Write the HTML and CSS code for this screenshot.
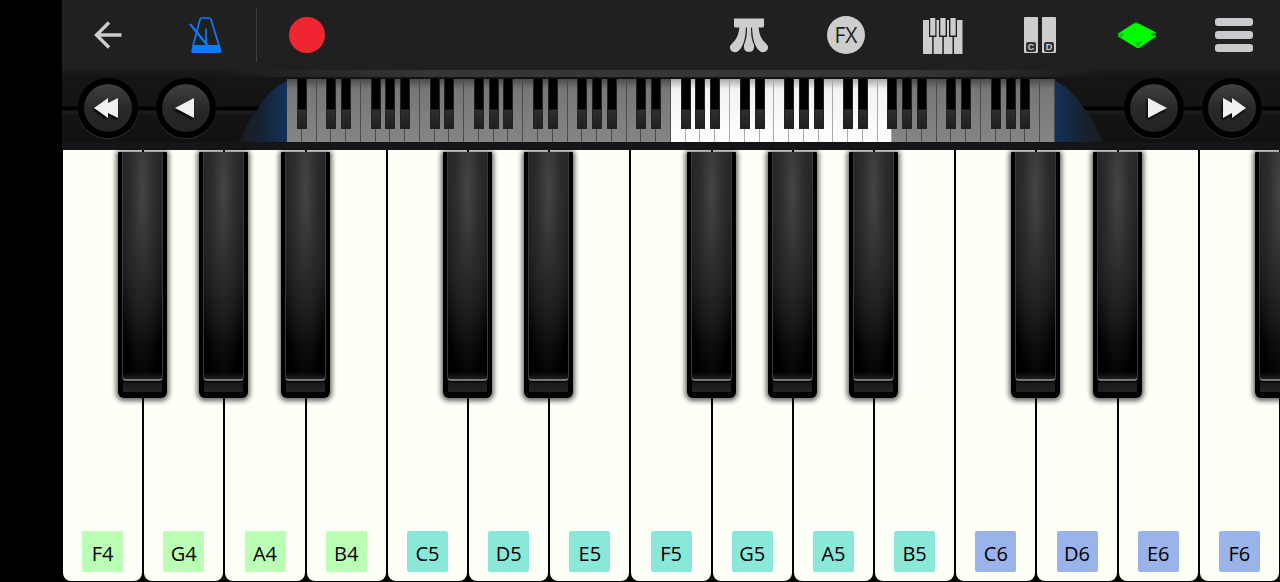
FILE: index.html
```html
<!DOCTYPE html>
<html lang="en">
<head>
  <meta charset="UTF-8" />
  <meta name="viewport" content="width=device-width, initial-scale=1.0"/>
  <title>Piano</title>
  <link rel="stylesheet" href="styles.css">
</head>
<body>

  <div class="piano">
    <header class="toolbar">
      <div class="tools">
        <button class="tool" aria-label="Back">
          <svg width="28" height="28" viewBox="0 0 28 28" fill="none" stroke="#cdcdcd" stroke-width="3.400"><path d="M15 1.500 2.500 14 15 26.500M3 14H27.500"/></svg>
        </button>
        <button class="tool" aria-label="Metronome">
          <svg width="34" height="38" viewBox="0 0 34 38" fill="none" stroke="#0a7cff" stroke-width="1.700">
            <path d="M5 30 12 3.500Q12.500 2 14 2H21Q22.500 2 23 3.500L31.500 31M18 12.500V27"/>
            <path d="M2 8 20 30" stroke-width="2.200"/>
            <path d="M4.500 29H32L33.500 35Q33.500 37 32 37H5Q3 37 3.300 35Z" fill="#0a7cff" stroke="none"/>
          </svg>
        </button>
      </div>
      <div class="tools record-group">
        <button class="tool" aria-label="Record"><span class="record-dot"></span></button>
      </div>
      <div class="tools tools-right">
        <button class="tool" aria-label="Pedal">
          <svg width="40" height="36" viewBox="0 0 40 36" fill="#cdcdcd">
            <path d="M5 1.500H35V9Q35 10.500 33.500 10.500H6.500Q5 10.500 5 9Z"/>
            <path d="M10.500 9H17C16.500 18 16 26 11 32.500Q7 37 2.500 34Q-1 30.500 3 26.500C8 22 10 17 10.500 9Z"/>
            <path d="M29.500 9H23C23.500 18 24 26 29 32.500Q33 37 37.500 34Q41 30.500 37 26.500C32 22 30 17 29.500 9Z"/>
            <path d="M18 9H22C22 18 22.500 22 25 28Q26 35 20 35Q14 35 15 28C17.500 22 18 18 18 9Z"/>
          </svg>
        </button>
        <button class="tool" aria-label="Effects"><span class="fx">FX</span></button>
        <button class="tool" aria-label="Keyboard">
          <svg width="40" height="37" viewBox="0 0 40 37">
            <path fill="#cdcdcd" d="M0 3H39.500V37H0Z"/>
            <path fill="#202020" d="M6 0H13.500V20H6ZM16 0H24V20H16ZM26 0H34V20H26ZM9.200 18H10.700V37H9.200ZM19.300 18H20.800V37H19.300ZM29.500 18H31V37H29.500Z"/>
            <path fill="#cdcdcd" d="M7.200 1H12.300V18.500H7.200ZM17.300 1H22.600V18.500H17.300ZM27.400 1H32.700V18.500H27.400Z"/>
          </svg>
        </button>
        <button class="tool note-names" aria-label="Note names"><span class="note-bar"><b>C</b></span><span class="note-bar"><b>D</b></span></button>
        <button class="tool" aria-label="Theme">
          <svg width="40" height="28" viewBox="0 0 40 28">
            <path fill="#00fa00" d="M19 1 39 11.500V15.500L22 27H20L1 15.500V12.500Z"/>
            <path fill="#0a9a20" d="M17 3 19 1 22 3ZM34 12 39 11.500V15L35 15Z"/>
            <path fill="#06c810" d="M1 12.500 7 12 5 17 1 15.500ZM17 21 25 21 21 26Z"/>
          </svg>
        </button>
        <button class="tool menu" aria-label="Menu"><span></span><span></span><span></span></button>
      </div>
    </header>

    <nav class="navigator">
      <button class="nav-btn" aria-label="Octave down">
        <svg width="28" height="24" viewBox="0 0 28 24"><path d="M0 12 14 2V7L24 2V22L14 17V22Z"/></svg>
      </button>
      <button class="nav-btn" aria-label="Key down">
        <svg width="28" height="24" viewBox="0 0 28 24"><path d="M3 12 22 2V22Z"/></svg>
      </button>
      <div class="overview">
        <svg class="wing" viewBox="0 0 48 65" preserveAspectRatio="none">
          <defs>
            <linearGradient id="wing">
              <stop offset="0" stop-color="#191b1e"/>
              <stop offset="0.450" stop-color="#162333"/>
              <stop offset="1" stop-color="#123259"/>
            </linearGradient>
          </defs>
          <path fill="url(#wing)" d="M48 3C34 9 26 20 17 34Q6 48 0 65H48Z"/>
        </svg>
        <div class="mini-keys" id="miniKeys"></div>
        <svg class="wing wing-right" viewBox="0 0 48 65" preserveAspectRatio="none">
          <path fill="url(#wing)" d="M48 3C34 9 26 20 17 34Q6 48 0 65H48Z"/>
        </svg>
      </div>
      <button class="nav-btn" aria-label="Key up">
        <svg width="28" height="24" viewBox="0 0 28 24"><path d="M8 2 27 12 8 22Z"/></svg>
      </button>
      <button class="nav-btn" aria-label="Octave up">
        <svg width="28" height="24" viewBox="0 0 28 24"><path d="M28 12 14 2V7L5 2V22L14 17V22Z"/></svg>
      </button>
    </nav>

    <main class="keys">
      <div class="key"><button class="white"><span class="note oct4">F4</span></button><button class="black" aria-label="F#4"></button></div>
      <div class="key"><button class="white"><span class="note oct4">G4</span></button><button class="black" aria-label="G#4"></button></div>
      <div class="key"><button class="white"><span class="note oct4">A4</span></button><button class="black" aria-label="A#4"></button></div>
      <div class="key"><button class="white"><span class="note oct4">B4</span></button></div>
      <div class="key"><button class="white"><span class="note oct5">C5</span></button><button class="black" aria-label="C#5"></button></div>
      <div class="key"><button class="white"><span class="note oct5">D5</span></button><button class="black" aria-label="D#5"></button></div>
      <div class="key"><button class="white"><span class="note oct5">E5</span></button></div>
      <div class="key"><button class="white"><span class="note oct5">F5</span></button><button class="black" aria-label="F#5"></button></div>
      <div class="key"><button class="white"><span class="note oct5">G5</span></button><button class="black" aria-label="G#5"></button></div>
      <div class="key"><button class="white"><span class="note oct5">A5</span></button><button class="black" aria-label="A#5"></button></div>
      <div class="key"><button class="white"><span class="note oct5">B5</span></button></div>
      <div class="key"><button class="white"><span class="note oct6">C6</span></button><button class="black" aria-label="C#6"></button></div>
      <div class="key"><button class="white"><span class="note oct6">D6</span></button><button class="black" aria-label="D#6"></button></div>
      <div class="key"><button class="white"><span class="note oct6">E6</span></button></div>
      <div class="key"><button class="white"><span class="note oct6">F6</span></button><button class="black" aria-label="F#6"></button></div>
    </main>
  </div>

  <script src="script.js"></script>
</body>
</html>
```

FILE: styles.css
```css
* {
  box-sizing: border-box;
}
body {
  margin: 0;
  background-color: #000;
  font-family: "Open Sans", "Liberation Sans", sans-serif;
}
button {
  margin: 0;
  padding: 0;
  border: none;
  background: none;
  font-family: inherit;
  cursor: pointer;
}
.piano {
  display: flex;
  flex-direction: column;
  min-height: 100vh;
  margin-left: 62px;
  overflow: hidden;
}

/* toolbar */
.toolbar {
  display: flex;
  align-items: center;
  height: 70px;
  padding: 0 22px;
  background-color: #202020;
}
.tools {
  display: flex;
  align-items: center;
  gap: 49px;
}
.tool {
  display: flex;
  align-items: center;
  justify-content: center;
  width: 48px;
  height: 54px;
}
.record-group {
  margin-left: 27px;
  padding-left: 26px;
  border-left: 1px solid #3d3d3d;
}
.record-dot {
  width: 36px;
  height: 36px;
  border-radius: 50%;
  background-color: #ef2631;
}
.tools-right {
  margin-left: auto;
}
.fx {
  width: 38px;
  height: 38px;
  border-radius: 50%;
  background-color: #cdcdcd;
  color: #202020;
  font-size: 21px;
  line-height: 38px;
}
.note-names {
  gap: 4px;
}
.note-bar {
  display: flex;
  align-items: flex-end;
  justify-content: center;
  width: 14px;
  height: 36px;
  padding-bottom: 1px;
  border-radius: 1px;
  background-color: #cdcdcd;
}
.note-bar b {
  width: 10px;
  height: 10px;
  border-radius: 2px;
  background-color: #333;
  color: #cdcdcd;
  font-family: "Liberation Sans", sans-serif;
  font-size: 9px;
  line-height: 10px;
}
.menu {
  flex-direction: column;
  gap: 5px;
}
.menu span {
  width: 38px;
  height: 8px;
  border-radius: 3px;
  background-color: #cac9cd;
}

/* navigator strip */
.navigator {
  display: flex;
  align-items: flex-start;
  gap: 18px;
  height: 80px;
  padding: 8px 18px 0 16px;
  background:
    linear-gradient(90deg, transparent 12%, #363636 30%, #363636 70%, transparent 86%) top / 100% 7px no-repeat,
    linear-gradient(#1b1b1b 0, #151515 6px, #141414 36px, #000 37px, #000 40px, #1f1f1f 41px, #131313 46px, #111 72px, #161616 73px);
}
.nav-btn {
  display: flex;
  flex-shrink: 0;
  align-items: center;
  justify-content: center;
  width: 60px;
  height: 60px;
  border: 6px solid #000;
  border-radius: 50%;
  background: linear-gradient(#414141, #292929 50%, #222) padding-box;
  box-shadow: 0 1px 1px #343434;
}
.nav-btn svg {
  fill: #f0f0f0;
  filter: drop-shadow(-1px 2px 1px #000);
}
.overview {
  display: flex;
  flex: 1;
  height: 64px;
  margin: 0 3px 0 5px;
}
.wing {
  flex-shrink: 0;
  width: 48px;
  height: 64px;
}
.wing-right {
  transform: scaleX(-1);
}
.mini-keys {
  display: flex;
  flex: 1;
  border-top: 1px solid #111;
  background-color: #4c4c4c;
}
.mini-key {
  position: relative;
  flex: 1;
  border-right: 1px solid #4c4c4c;
  background: linear-gradient(#4c4c4c, #777 10px, #858585);
}
.mini-key.active {
  border-right-color: #aaa;
  background: linear-gradient(#aaa, #f2f2f2 10px, #fff);
}
.mini-key.sharp::after {
  content: "";
  position: absolute;
  top: 0;
  right: -6px;
  z-index: 1;
  width: 8px;
  height: 49px;
  border: 1px solid #222;
  border-top: none;
  background: linear-gradient(#000 30px, #2e2e2e 31px, #202020);
}

/* keyboard */
.keys {
  display: flex;
  flex: 1;
}
.key {
  position: relative;
  display: flex;
  flex: 1;
  padding: 0 1px 1px;
}
.white {
  display: flex;
  flex: 1;
  align-items: flex-end;
  justify-content: center;
  padding-bottom: 9px;
  border-radius: 0 0 8px 8px;
  background-color: #fefff6;
}
.note {
  width: 41px;
  height: 41px;
  padding-top: 3px;
  border-radius: 2px;
  color: #000;
  font-size: 20px;
  line-height: 40px;
}
.oct4 {
  background-color: #bbffb6;
}
.oct5 {
  background-color: #89e8d8;
}
.oct6 {
  background-color: #9ab3eb;
}
.black {
  position: absolute;
  top: 2px;
  right: -24px;
  z-index: 1;
  display: flex;
  flex-direction: column;
  align-items: center;
  width: 49px;
  height: 57%;
  padding-bottom: 6px;
  border-radius: 1px 1px 6px 6px;
  background-color: #000;
  box-shadow: 0 1px 5px 2px rgba(0,0,0,0.6);
}
.black::before {
  content: "";
  flex: 1;
  width: 39px;
  border: 1px solid #3a3a3a;
  border-top: none;
  border-bottom: 2px solid #777;
  border-radius: 0 0 4px 4px;
  background:
    linear-gradient(transparent 97%, #222),
    radial-gradient(ellipse 26px 200px at 50% 38px, #454545, rgba(50,50,50,0.7) 45%, transparent),
    linear-gradient(#222, #181818 50%, #000 85%);
}
.black::after {
  content: "";
  width: 39px;
  height: 10px;
  margin-top: 1px;
  background: linear-gradient(#181818, #222);
}
```

FILE: script.js
```javascript
// 88-key overview: 52 white keys starting at A0
const miniKeys = document.getElementById('miniKeys');
const names = ['A', 'B', 'C', 'D', 'E', 'F', 'G'];
const firstVisible = 26; // F4
const visibleCount = 15;

for (let i = 0; i < 52; i++) {
  const key = document.createElement('span');
  const name = names[i % 7];
  key.className = 'mini-key';
  if (name !== 'B' && name !== 'E' && i < 51) key.classList.add('sharp');
  if (i >= firstVisible && i < firstVisible + visibleCount) key.classList.add('active');
  miniKeys.appendChild(key);
}
```
